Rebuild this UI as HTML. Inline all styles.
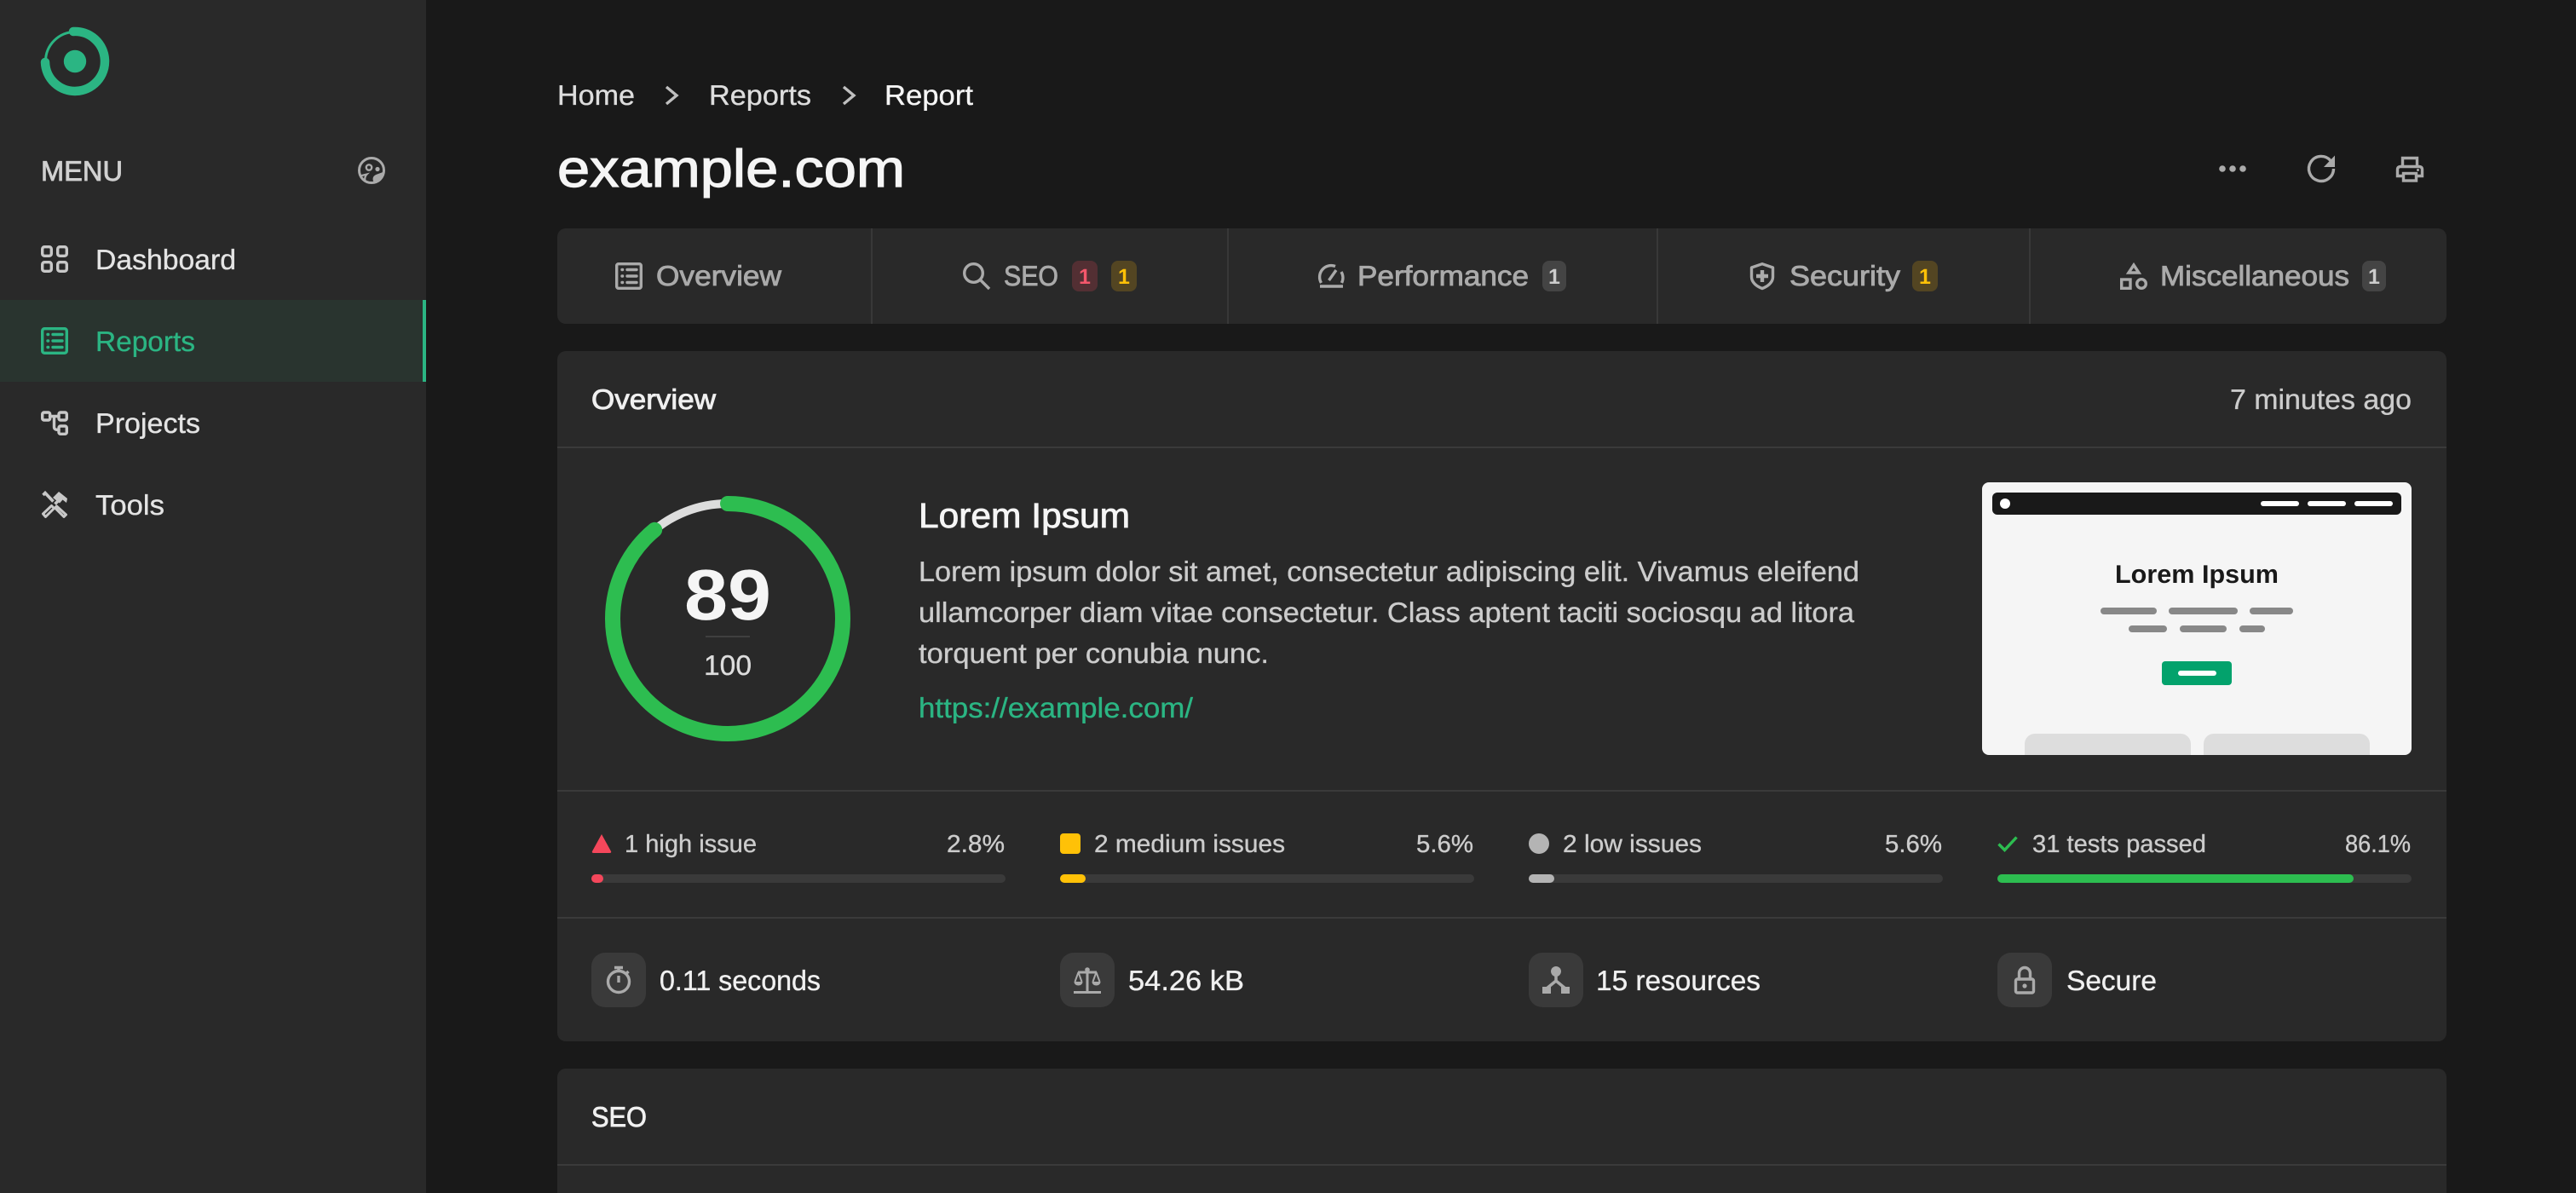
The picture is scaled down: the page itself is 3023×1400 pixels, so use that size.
<!DOCTYPE html>
<html lang="en">
<head>
<meta charset="utf-8">
<title>example.com - Report</title>
<style>
html,body{margin:0;padding:0;width:3023px;height:1400px;overflow:hidden;background:#191919}
#root{position:relative;width:3023px;height:1400px;overflow:hidden;background:#191919}
.abs{position:absolute}
.sidebar{left:0;top:0;width:500px;height:1400px;background:#292929}
.active{left:0;top:352px;width:496px;height:96px;background:#29342f;border-right:4px solid #2bb583}
.card{left:654px;width:2217px;background:#292929;border-radius:10px}
.tabs{top:268px;height:112px}
.tabs i{position:absolute;top:0;width:2px;height:112px;background:#383838}
.ov{top:412px;height:810px}
.seo{top:1254px;height:146px;border-radius:10px 10px 0 0}
.sep{position:absolute;left:0;width:100%;height:2px;background:#3a3a3a}
svg{position:absolute;left:0;top:0}
text{font-family:"Liberation Sans",sans-serif;text-rendering:geometricPrecision;white-space:pre;fill:currentColor;stroke:currentColor;stroke-width:.35px}
.m{stroke-width:.85px}
.t32{font-size:33px}
.t28{font-size:29px;color:#cccccc}
.nb{stroke-width:0}
.ic{fill:none;stroke:#c8c8c8;stroke-width:3.4;stroke-linecap:round;stroke-linejoin:round}
.ig{fill:none;stroke:#aaaaaa;stroke-width:3.4;stroke-linecap:round;stroke-linejoin:round}
</style>
</head>
<body>
<div id="root">
<div class="abs sidebar"></div>
<div class="abs active"></div>
<div class="abs card tabs"><i style="left:368px"></i><i style="left:786px"></i><i style="left:1290px"></i><i style="left:1727px"></i></div>
<div class="abs card ov">
  <div class="sep" style="top:112px"></div>
  <div class="sep" style="top:515px"></div>
  <div class="sep" style="top:664px"></div>
</div>
<div class="abs card seo"><div class="sep" style="top:112px"></div></div>

<svg width="3023" height="1400" viewBox="0 0 3023 1400" xmlns="http://www.w3.org/2000/svg">
  <!-- logo -->
  <circle cx="88" cy="72" r="34.5" fill="none" stroke="#2bb583" stroke-width="3"/>
  <path d="M86 37A35 35 0 1 1 53 73" fill="none" stroke="#2bb583" stroke-width="10.5" stroke-linecap="round"/>
  <circle cx="88" cy="72" r="13.2" fill="#2bb583"/>

  <!-- menu -->
  <text x="48" y="212" class="t32 m" color="#d0d0d0" textLength="96" lengthAdjust="spacingAndGlyphs">MENU</text>
  <g transform="translate(420,184)">
    <circle cx="16" cy="16" r="14.5" fill="none" stroke="#aaaaaa" stroke-width="3"/>
    <circle cx="13" cy="12.5" r="3.2" fill="none" stroke="#aaaaaa" stroke-width="2.4"/>
    <circle cx="23" cy="14.5" r="2.6" fill="#aaaaaa"/>
    <path d="M31 17C27 19.5 21 20 18.5 23C16.5 26 18 30 20.5 31C27 30 31 24 31 17Z" fill="#aaaaaa"/>
    <path d="M2.5 22.5L10.5 20.5C9 22 7.5 25 8.5 28" fill="none" stroke="#aaaaaa" stroke-width="2.2"/>
  </g>

  <!-- nav -->
  <g transform="translate(48,288)" class="ic">
    <rect x="1.7" y="1.7" width="10.6" height="10.6" rx="2.5"/><rect x="19.7" y="1.7" width="10.6" height="10.6" rx="2.5"/>
    <rect x="1.7" y="19.7" width="10.6" height="10.6" rx="2.5"/><rect x="19.7" y="19.7" width="10.6" height="10.6" rx="2.5"/>
  </g>
  <text x="112" y="316" class="t32" color="#e4e4e4" textLength="165" lengthAdjust="spacingAndGlyphs">Dashboard</text>

  <g transform="translate(48,384)" fill="none" stroke="#2bb583" stroke-width="3.4" stroke-linecap="round">
    <rect x="1.7" y="1.7" width="28.6" height="28.6" rx="2.5"/>
    <path d="M8 8.5H8.6M8 16H8.6M8 23.5H8.6M14 8.5H25M14 16H25M14 23.5H25"/>
  </g>
  <text x="112" y="412" class="t32" color="#2bb583" textLength="117" lengthAdjust="spacingAndGlyphs">Reports</text>

  <g transform="translate(48,480)" class="ic">
    <rect x="1.7" y="4" width="9" height="9" rx="2"/>
    <rect x="21" y="4" width="9.3" height="9" rx="2"/>
    <rect x="21" y="20" width="9.3" height="9.3" rx="2"/>
    <path d="M10.5 8.5H21M15.5 8.5V21C15.5 23.5 17 24.5 21 24.5"/>
  </g>
  <text x="112" y="508" class="t32" color="#e4e4e4" textLength="123" lengthAdjust="spacingAndGlyphs">Projects</text>

  <g transform="translate(48,576)">
    <path d="M2.5 5L5 2.5L14.5 12.5" fill="none" stroke="#c8c8c8" stroke-width="3.6"/>
    <path d="M18.5 18L29.5 28L27 30.5L16.5 20Z" fill="none" stroke="#c8c8c8" stroke-width="3" stroke-linejoin="round"/>
    <path d="M2.5 27L12.5 17.5L15.5 20.5L5.5 30.5Z" fill="none" stroke="#c8c8c8" stroke-width="3" stroke-linejoin="round"/>
    <path d="M16.5 15.5L21 11" fill="none" stroke="#c8c8c8" stroke-width="3.6"/>
    <path d="M14 8L21 1L31 9L30 14L25.5 10.5L22 14.5Z" fill="#c8c8c8"/>
  </g>
  <text x="112" y="604" class="t32" color="#e4e4e4" textLength="81" lengthAdjust="spacingAndGlyphs">Tools</text>

  <!-- breadcrumb -->
  <text x="654" y="123" class="t32" color="#dddddd" textLength="91" lengthAdjust="spacingAndGlyphs">Home</text>
  <path d="M782 102L794 112L782 122" fill="none" stroke="#c0c0c0" stroke-width="3.4"/>
  <text x="832" y="123" class="t32" color="#dddddd" textLength="120" lengthAdjust="spacingAndGlyphs">Reports</text>
  <path d="M990 102L1002 112L990 122" fill="none" stroke="#c0c0c0" stroke-width="3.4"/>
  <text x="1038" y="123" class="t32" color="#f5f5f5" textLength="104" lengthAdjust="spacingAndGlyphs">Report</text>

  <!-- title -->
  <text x="654" y="219" font-size="62" class="m" style="stroke-width:1.2px" color="#f5f5f5" textLength="408" lengthAdjust="spacingAndGlyphs">example.com</text>

  <!-- top actions -->
  <g fill="#aaaaaa"><circle cx="2608" cy="198" r="3.8"/><circle cx="2620" cy="198" r="3.8"/><circle cx="2632" cy="198" r="3.8"/></g>
  <path d="M2735 188.5A14.5 14.5 0 1 0 2738.5 198" class="ig" style="stroke-linecap:butt"/>
  <path d="M2740 182.5V196H2727Z" fill="#aaaaaa"/>
  <g class="ig" style="stroke-linecap:butt;stroke-linejoin:miter">
    <path d="M2819.5 194V185.5H2836.5V194"/>
    <path d="M2819 206.5H2813.5V199C2813.5 196.5 2815 195.5 2817 195.5H2839C2841 195.5 2842.5 196.5 2842.5 199V206.5H2837"/>
    <rect x="2820.5" y="203.5" width="15" height="8.5"/>
  </g>
  <circle cx="2837.5" cy="199.5" r="1.5" fill="#aaaaaa"/>

  <!-- tabs -->
  <g transform="translate(722,308)" class="ig">
    <rect x="1.7" y="1.7" width="28.6" height="28.6" rx="2"/>
    <path d="M8 8.5H8.6M8 16H8.6M8 23.5H8.6M14 8.5H25M14 16H25M14 23.5H25"/>
  </g>
  <text x="770" y="335" class="t32 m" color="#aaaaaa" textLength="147" lengthAdjust="spacingAndGlyphs">Overview</text>

  <g transform="translate(1130,308)" class="ig" style="stroke-linecap:butt">
    <circle cx="12.5" cy="12.5" r="10.8"/><path d="M20.5 20.5L31 31"/>
  </g>
  <text x="1178" y="335" class="t32 m" color="#aaaaaa" textLength="64" lengthAdjust="spacingAndGlyphs">SEO</text>
  <rect x="1258" y="306" width="30" height="36" rx="8" fill="#532f33"/>
  <text x="1273" y="333" font-size="25" font-weight="700" class="nb" color="#f4576b" text-anchor="middle">1</text>
  <rect x="1304" y="306" width="30" height="36" rx="8" fill="#534522"/>
  <text x="1319" y="333" font-size="25" font-weight="700" class="nb" color="#ffc107" text-anchor="middle">1</text>

  <g transform="translate(1546,308)" class="ig" style="stroke-linecap:butt">
    <path d="M4.5 24A13.5 13.5 0 0 1 21 4.5"/><path d="M28 11A13.5 13.5 0 0 1 28.5 24"/>
    <path d="M3 28H30"/><path d="M13.5 21L22 9"/>
  </g>
  <text x="1593" y="335" class="t32 m" color="#aaaaaa" textLength="201" lengthAdjust="spacingAndGlyphs">Performance</text>
  <rect x="1810" y="306" width="28" height="36" rx="8" fill="#444444"/>
  <text x="1824" y="333" font-size="25" font-weight="700" class="nb" color="#cccccc" text-anchor="middle">1</text>

  <g transform="translate(2052,308)">
    <path d="M16 1.7L28.5 6V17C28.5 23 23 28 16 30.5C9 28 3.5 23 3.500 17V6Z" class="ig"/>
    <path d="M13.8 9H18.2V13.8H23V18.2H18.2V23H13.8V18.2H9V13.800H13.8Z" fill="#aaaaaa"/>
  </g>
  <text x="2100" y="335" class="t32 m" color="#aaaaaa" textLength="130" lengthAdjust="spacingAndGlyphs">Security</text>
  <rect x="2244" y="306" width="30" height="36" rx="8" fill="#534522"/>
  <text x="2259" y="333" font-size="25" font-weight="700" class="nb" color="#ffc107" text-anchor="middle">1</text>

  <g transform="translate(2488,308)" class="ig" style="stroke-linecap:butt;stroke-linejoin:miter">
    <path d="M16 3L22 12H10Z"/>
    <rect x="1.7" y="20" width="10.3" height="10.3"/>
    <circle cx="25" cy="25" r="5.300"/>
  </g>
  <text x="2535" y="335" class="t32 m" color="#aaaaaa" textLength="222" lengthAdjust="spacingAndGlyphs">Miscellaneous</text>
  <rect x="2772" y="306" width="28" height="36" rx="8" fill="#444444"/>
  <text x="2786" y="333" font-size="25" font-weight="700" class="nb" color="#cccccc" text-anchor="middle">1</text>

  <!-- overview header -->
  <text x="694" y="480" class="t32 m" color="#f0f0f0" textLength="146" lengthAdjust="spacingAndGlyphs">Overview</text>
  <text x="2617" y="480" class="t32" color="#cccccc" textLength="213" lengthAdjust="spacingAndGlyphs">7 minutes ago</text>

  <!-- gauge -->
  <circle cx="854" cy="726" r="135" fill="none" stroke="#dddddd" stroke-width="10"/>
  <circle cx="854" cy="726" r="135" fill="none" stroke="#2dbd50" stroke-width="18" stroke-linecap="round" stroke-dasharray="754.9 848.23" transform="rotate(-90 854 726)"/>
  <text x="803" y="727" font-size="84" font-weight="700" class="nb" color="#f5f5f5" textLength="102" lengthAdjust="spacingAndGlyphs">89</text>
  <rect x="828" y="746" width="52" height="2" fill="#3f3f3f"/>
  <text x="826" y="792" class="t32" color="#dddddd" textLength="56" lengthAdjust="spacingAndGlyphs">100</text>

  <!-- summary -->
  <text x="1078" y="619" font-size="41" class="m" color="#f5f5f5" textLength="248" lengthAdjust="spacingAndGlyphs">Lorem Ipsum</text>
  <text x="1078" y="682" class="t32" color="#cccccc" textLength="1104" lengthAdjust="spacingAndGlyphs">Lorem ipsum dolor sit amet, consectetur adipiscing elit. Vivamus eleifend</text>
  <text x="1078" y="730" class="t32" color="#cccccc" textLength="1098" lengthAdjust="spacingAndGlyphs">ullamcorper diam vitae consectetur. Class aptent taciti sociosqu ad litora</text>
  <text x="1078" y="778" class="t32" color="#cccccc" textLength="411" lengthAdjust="spacingAndGlyphs">torquent per conubia nunc.</text>
  <text x="1078" y="842" class="t32" color="#2bb583" textLength="322" lengthAdjust="spacingAndGlyphs">https://example.com/</text>

  <!-- preview -->
  <clipPath id="pv"><rect x="2326" y="566" width="504" height="320" rx="8"/></clipPath>
  <g clip-path="url(#pv)">
    <rect x="2326" y="566" width="504" height="320" fill="#f5f5f5"/>
    <path d="M2376 886V873A12 12 0 0 1 2388 861H2559A12 12 0 0 1 2571 873V886Z" fill="#dddddd"/>
    <path d="M2586 886V873A12 12 0 0 1 2598 861H2769A12 12 0 0 1 2781 873V886Z" fill="#dddddd"/>
  </g>
  <rect x="2338" y="578" width="480" height="26" rx="6" fill="#191919"/>
  <circle cx="2353" cy="591" r="6" fill="#ffffff"/>
  <g fill="#ffffff"><rect x="2653" y="588" width="45" height="6" rx="3"/><rect x="2708" y="588" width="45" height="6" rx="3"/><rect x="2763" y="588" width="45" height="6" rx="3"/></g>
  <text x="2482" y="684" font-size="30" font-weight="700" class="nb" color="#191919" textLength="192" lengthAdjust="spacingAndGlyphs">Lorem Ipsum</text>
  <g fill="#888888">
    <rect x="2465" y="713" width="66" height="8" rx="4"/><rect x="2545" y="713" width="81" height="8" rx="4"/><rect x="2640" y="713" width="51" height="8" rx="4"/>
    <rect x="2498" y="734" width="45" height="8" rx="4"/><rect x="2558" y="734" width="55" height="8" rx="4"/><rect x="2628" y="734" width="30" height="8" rx="4"/>
  </g>
  <rect x="2537" y="776" width="82" height="28" rx="4" fill="#03a26c"/>
  <rect x="2556" y="787" width="45" height="6" rx="3" fill="#ffffff"/>

  <!-- issue stats -->
  <path d="M706 979L717 999Q718 1001 715 1001H697Q694 1001 695 999Z" fill="#f4475b"/>
  <text x="733" y="1000" class="t28" textLength="155" lengthAdjust="spacingAndGlyphs">1 high issue</text>
  <text x="1111" y="1000" class="t28" textLength="68" lengthAdjust="spacingAndGlyphs">2.8%</text>
  <rect x="694" y="1026" width="486" height="10" rx="5" fill="#3a3a3a"/>
  <rect x="694" y="1026" width="14" height="10" rx="5" fill="#f4475b"/>

  <rect x="1244" y="978" width="24" height="24" rx="4" fill="#ffc107"/>
  <text x="1284" y="1000" class="t28" textLength="224" lengthAdjust="spacingAndGlyphs">2 medium issues</text>
  <text x="1662" y="1000" class="t28" textLength="67" lengthAdjust="spacingAndGlyphs">5.6%</text>
  <rect x="1244" y="1026" width="486" height="10" rx="5" fill="#3a3a3a"/>
  <rect x="1244" y="1026" width="30" height="10" rx="5" fill="#ffc107"/>

  <circle cx="1806" cy="990" r="12" fill="#b4b4b4"/>
  <text x="1834" y="1000" class="t28" textLength="163" lengthAdjust="spacingAndGlyphs">2 low issues</text>
  <text x="2212" y="1000" class="t28" textLength="67" lengthAdjust="spacingAndGlyphs">5.6%</text>
  <rect x="1794" y="1026" width="486" height="10" rx="5" fill="#3a3a3a"/>
  <rect x="1794" y="1026" width="30" height="10" rx="5" fill="#b4b4b4"/>

  <path d="M2345.5 990.5L2352.5 997.5L2366.5 982.5" fill="none" stroke="#2dbd50" stroke-width="3.4"/>
  <text x="2385" y="1000" class="t28" textLength="204" lengthAdjust="spacingAndGlyphs">31 tests passed</text>
  <text x="2752" y="1000" class="t28" textLength="77" lengthAdjust="spacingAndGlyphs">86.1%</text>
  <rect x="2344" y="1026" width="486" height="10" rx="5" fill="#3a3a3a"/>
  <rect x="2344" y="1026" width="418" height="10" rx="5" fill="#2dbd50"/>

  <!-- metrics -->
  <rect x="694" y="1118" width="64" height="64" rx="16" fill="#3a3a3a"/>
  <g class="ig" style="stroke-linecap:butt">
    <circle cx="726" cy="1152" r="12.5"/><path d="M721 1135.5H731M726 1135.5V1139M726 1145V1153M734.5 1143L737.5 1140"/>
  </g>
  <text x="774" y="1162" class="t32" color="#f0f0f0" textLength="189" lengthAdjust="spacingAndGlyphs">0.11 seconds</text>

  <rect x="1244" y="1118" width="64" height="64" rx="16" fill="#3a3a3a"/>
  <g transform="translate(1260,1134)">
    <path d="M16 3V29M0 30.5H32M5 7H27" fill="none" stroke="#aaaaaa" stroke-width="3"/>
    <circle cx="16" cy="4" r="2.8" fill="#aaaaaa"/>
    <path d="M5.500 7L1.5 18M5.5 7L9.5 18M26.5 7L22.5 18M26.5 7L30.5 18" fill="none" stroke="#aaaaaa" stroke-width="2"/>
    <path d="M0.5 18H10.5C10.5 24 0.5 24 0.5 18ZM21.5 18H31.5C31.5 24 21.5 24 21.5 18Z" fill="#aaaaaa"/>
  </g>
  <text x="1324" y="1162" class="t32" color="#f0f0f0" textLength="136" lengthAdjust="spacingAndGlyphs">54.26 kB</text>

  <rect x="1794" y="1118" width="64" height="64" rx="16" fill="#3a3a3a"/>
  <g fill="#aaaaaa">
    <circle cx="1826" cy="1140" r="6"/>
    <rect x="1810" y="1158" width="10" height="8"/><rect x="1832" y="1158" width="10" height="8"/>
  </g>
  <path d="M1826 1144V1152M1826 1151L1815 1160M1826 1151L1837 1160" fill="none" stroke="#aaaaaa" stroke-width="3.5"/>
  <text x="1873" y="1162" class="t32" color="#f0f0f0" textLength="193" lengthAdjust="spacingAndGlyphs">15 resources</text>

  <rect x="2344" y="1118" width="64" height="64" rx="16" fill="#3a3a3a"/>
  <g class="ig">
    <rect x="2365.5" y="1149" width="21" height="16" rx="2"/>
    <path d="M2369.5 1149V1142A6.5 6.5 0 0 1 2382.5 1142V1149"/>
  </g>
  <circle cx="2376" cy="1157" r="2.6" fill="#aaaaaa"/>
  <text x="2425" y="1162" class="t32" color="#f0f0f0" textLength="106" lengthAdjust="spacingAndGlyphs">Secure</text>

  <!-- seo header -->
  <text x="694" y="1322" class="t32 m" color="#f0f0f0" textLength="65" lengthAdjust="spacingAndGlyphs">SEO</text>
</svg>
</div>
</body>
</html>
